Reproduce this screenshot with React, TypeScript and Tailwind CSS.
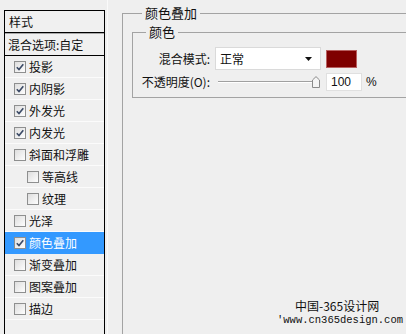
import React from "react";

const cjk = { fontFamily: '"Noto Sans CJK SC", "Noto Sans", sans-serif' };

function Box({ checked }: { checked: boolean }) {
  return (
    <svg width="12" height="12" viewBox="0 0 12 12" className="shrink-0">
      <defs>
        <linearGradient id="cbg" x1="0" y1="0" x2="1" y2="1">
          <stop offset="0" stopColor="#dcdcdc" />
          <stop offset="1" stopColor="#ffffff" />
        </linearGradient>
      </defs>
      <rect x="0.5" y="0.5" width="11" height="11" fill="url(#cbg)" stroke="#8e8f8f" />
      {checked && (
        <path d="M2.8 6.2 L5 8.6 L9.3 3.2" fill="none" stroke="#3b4a66" strokeWidth="1.6" />
      )}
    </svg>
  );
}

const rows: { label: string; checked: boolean; indent?: boolean; active?: boolean }[] = [
  { label: "投影", checked: true },
  { label: "内阴影", checked: true },
  { label: "外发光", checked: true },
  { label: "内发光", checked: true },
  { label: "斜面和浮雕", checked: false },
  { label: "等高线", checked: false, indent: true },
  { label: "纹理", checked: false, indent: true },
  { label: "光泽", checked: false },
  { label: "颜色叠加", checked: true, active: true },
  { label: "渐变叠加", checked: false },
  { label: "图案叠加", checked: false },
  { label: "描边", checked: false },
];

export default function App() {
  return (
    <div
      className="relative flex h-[334px] w-[406px] items-start overflow-hidden bg-[#efefef] text-[12px] text-[#111]"
      style={cjk}
    >
      {/* style list */}
      <div className="ml-[4px] mt-[10px] h-[340px] w-[101px] shrink-0 border border-black bg-[#f0f0f0]">
        <div className="flex h-[21px] items-center pl-[4px] leading-none">样式</div>
        <div className="h-[2px] border-t border-black bg-[#a8a8a8]" />
        <div className="flex h-[22px] items-center border-b border-black pl-[3px] leading-none">
          混合选项:自定
        </div>
        {rows.map((r) => (
          <div
            key={r.label}
            className={
              "flex h-[22px] items-center gap-[3px] border-b leading-none " +
              (r.active
                ? "border-[#3399ff] bg-[#3399ff] text-white"
                : "border-[#fbfbfb]") +
              (r.indent ? " pl-[22px]" : " pl-[9px]")
            }
          >
            <Box checked={r.checked} />
            <span>{r.label}</span>
          </div>
        ))}
      </div>

      <div className="ml-[2px] h-[334px] w-px shrink-0 bg-[#fafafa]" />

      {/* right settings */}
      <fieldset className="ml-[14px] mt-[5px] h-[340px] w-[320px] shrink-0 border border-[#a3a3a3] pl-[9px]">
        <legend className="ml-[10px] px-[3px] text-[13px] leading-[16px]">颜色叠加</legend>
        <fieldset className="mt-[3px] w-[320px] border border-[#a3a3a3] pb-[6px] pt-[7px]">
          <legend className="ml-[13px] px-[3px] text-[13px] leading-[16px]">颜色</legend>
          <div className="flex flex-col gap-[3px]">
            <div className="flex h-[23px] items-center">
              <span className="w-[77px] text-right leading-none">混合模式:</span>
              <div className="ml-[5px] flex h-[23px] w-[106px] items-center justify-between border border-[#dadada] bg-white pl-[4px] pr-[8px]">
                <span className="leading-none">正常</span>
                <svg width="7" height="4" viewBox="0 0 7 4">
                  <path d="M0 0 H7 L3.5 4 Z" fill="#111" />
                </svg>
              </div>
              <div className="ml-[5px] h-[18px] w-[31px] border border-[#b86060] bg-[#7f0000]" />
            </div>
            <div className="flex h-[18px] items-center">
              <span className="w-[77px] text-right leading-none">不透明度(O):</span>
              <div className="relative ml-[5px] flex h-[18px] w-[106px] items-center">
                <div className="ml-[3px] h-[2px] w-[100px] border-t border-[#a0a0a0] bg-white" />
                <svg
                  width="8"
                  height="12"
                  viewBox="0 0 8 12"
                  className="absolute left-[97px] top-[3px]"
                >
                  <path
                    d="M0.5 11.5 V4 L4 0.6 L7.5 4 V11.5 Z"
                    fill="#f4f4f4"
                    stroke="#8a8a8a"
                  />
                </svg>
              </div>
              <div className="ml-[5px] flex h-[18px] w-[36px] items-center border border-[#e0e0e0] bg-white pl-[4px] font-['Liberation_Sans'] leading-none">
                100
              </div>
              <span className="ml-[4px] font-['Liberation_Sans'] leading-none">%</span>
            </div>
          </div>
        </fieldset>
      </fieldset>

      {/* watermark */}
      <div className="absolute left-[277px] top-[300px] leading-none">
        <div className="ml-[18px] text-[12px]">中国-365设计网</div>
        <div className="mt-[3px] whitespace-nowrap font-['Liberation_Mono'] text-[10.5px]">
          'www.cn365design.com
        </div>
      </div>
    </div>
  );
}
